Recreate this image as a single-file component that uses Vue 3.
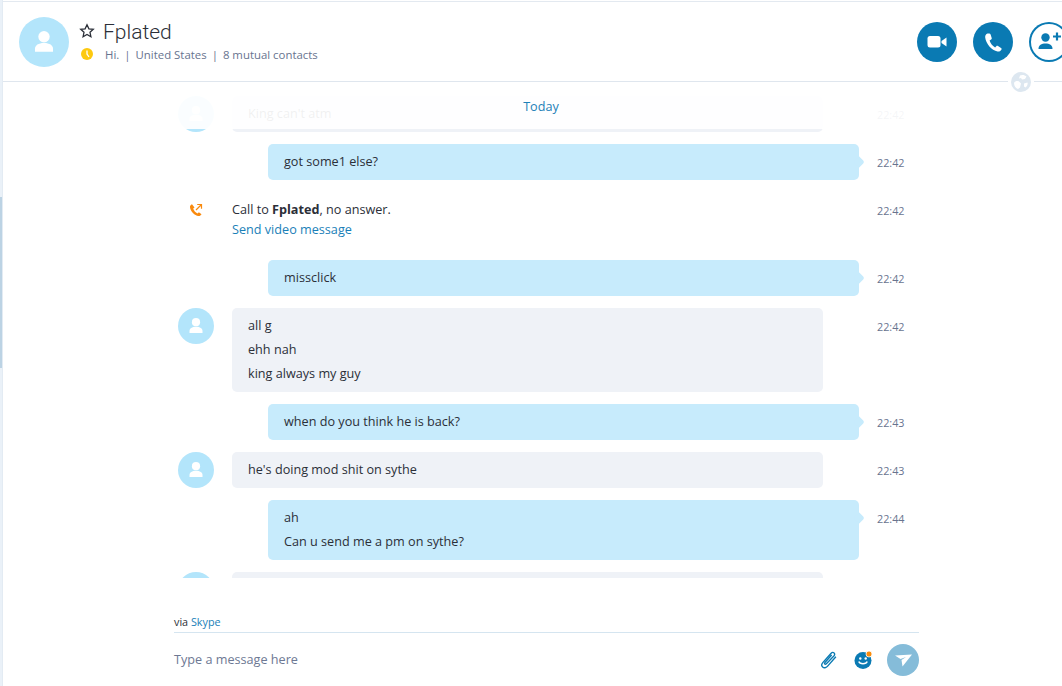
<template>
  <div class="app-shell">
    <div class="side-strip"><div class="thumb"></div></div>
    <div class="chat">
      <header class="chat-head">
        <div class="avatar big">
          <svg viewBox="0 0 36 36"><circle cx="18" cy="14.200" r="4.100" /><path d="M11.500 25v-2c0-2.500 2.500-4.200 6.500-4.200s6.500 1.700 6.500 4.200v2z" /></svg>
        </div>
        <div class="who">
          <div class="name-line">
            <svg class="star" viewBox="0 0 16 16"><path d="M8 1.800l1.900 4 4.400.5-3.300 3 .9 4.400L8 11.500l-3.900 2.200.9-4.400-3.300-3 4.400-.5z" /></svg>
            <span class="name">Fplated</span>
          </div>
          <div class="sub-line">
            <svg class="clock" viewBox="0 0 12 12"><circle cx="6" cy="6" r="6" /><path d="M6 2.500V6l2 3" /></svg>
            <span>Hi.</span><span class="bar">|</span><span>United States</span><span class="bar">|</span><span>8 mutual contacts</span>
          </div>
        </div>
        <div class="actions">
          <button class="round">
            <svg viewBox="0 0 40 40"><rect x="10.500" y="14" width="13" height="11.500" rx="2.500" /><path d="M24.500 19l5-3.500v9l-5-3.500z" /></svg>
          </button>
          <button class="round">
            <svg viewBox="0 0 40 40"><path d="M14.500 11.500c-1.500.5-2.500 2-2.300 4 .6 6 6.500 13 12.300 14 1.800.3 3.300-.5 4-2 .3-.7.1-1.200-.5-1.600l-3-1.900c-.6-.4-1.200-.3-1.700.2l-1.200 1.200c-2.700-1.300-4.700-4-5.500-6.800l1.500-1c.6-.4.8-1 .6-1.700l-1.100-3.400c-.3-.8-1-1.300-1.900-1z" /></svg>
          </button>
          <button class="round outline">
            <svg viewBox="0 0 40 40"><circle cx="16.500" cy="15.500" r="4.200" /><path d="M9.500 27c0-4 3-5.500 7-5.500s7 1.500 7 5.500z" /><path d="M24 14.500h8M28 10.500v8" class="plus" /></svg>
          </button>
        </div>
        <div class="globe">
          <svg viewBox="0 0 20 20"><circle cx="10" cy="10" r="10" /><path class="land" d="M9 3.500c2-1 5-.5 6.500 1l-1.500 2.500-3 .5-1-1.500-2 .5zM3 11c1-2 3.500-2.500 5-1.500l2 2-1 4-2 1.500C5 16.500 3 14 3 11zM13 11.500l3.500-1c.5 2-.5 4-2 5l-1.500-1z" /></svg>
        </div>
      </header>

      <section class="thread">
        <div class="today-veil"></div>
        <div class="today">Today</div>
        <div class="messages">
          <template v-for="m in messages" :key="m.id">
            <div v-if="m.type === 'call'" class="row call">
              <div class="call-icon">
                <svg viewBox="0 0 14 14"><path d="M3 1.200C1.700 1.800.8 2.700 1 4.300c.4 3.800 4.700 8.500 8.500 8.800 1.300.1 2.300-.6 3-1.800l-2.600-2-1.400 1.200C6.500 9.600 4.800 7.500 4.200 5.500l1.300-1z" class="fill" /><path d="M7 7l5-5M8.200 1.500H12.500V5.800" class="line" /></svg>
              </div>
              <div class="call-text">
                <div>Call to <b>Fplated</b>, no answer.</div>
                <a class="link">Send video message</a>
              </div>
              <span class="time">{{ m.time }}</span>
            </div>
            <div v-else-if="m.type === 'in'" class="row incoming">
              <div class="avatar">
                <svg viewBox="0 0 36 36"><circle cx="18" cy="14.200" r="4.100" /><path d="M11.500 25v-2c0-2.500 2.500-4.200 6.500-4.200s6.500 1.700 6.500 4.200v2z" /></svg>
              </div>
              <div class="bubble in">
                <div v-for="l in m.lines" :key="l">{{ l }}</div>
              </div>
              <span class="time">{{ m.time }}</span>
            </div>
            <div v-else class="row outgoing">
              <div class="bubble out">
                <div v-for="l in m.lines" :key="l">{{ l }}</div>
              </div>
              <span class="time">{{ m.time }}</span>
            </div>
          </template>
        </div>
      </section>

      <footer class="composer">
        <div class="via">via <span class="link">Skype</span></div>
        <div class="input-row">
          <span class="placeholder">Type a message here</span>
          <svg class="clip" viewBox="1 0 16 17"><path d="M15.500 5.500l-8 9c-1.300 1.500-3.300 1.800-4.500.7s-1-3 .3-4.500l7.500-8.400c.9-1 2.200-1.200 3-.5s.7 2-.2 3L6.500 12c-.5.500-1.100.6-1.500.3-.4-.4-.3-1 .2-1.500l6.300-7" /></svg>
          <svg class="smile" viewBox="0 0 18 18"><circle cx="9" cy="9.500" r="8.500" class="face" /><circle cx="6.300" cy="7.500" r="1.200" class="eye" /><circle cx="11.700" cy="7.500" r="1.200" class="eye" /><path d="M4.800 10.500c1 3 7.400 3 8.400 0" class="mouth" /><circle cx="15" cy="3" r="3" class="dot" /></svg>
          <button class="send">
            <svg viewBox="0 0 32 32"><path d="M8 11.500l17-1-9.500 12-1-6.500 4.500-3-5.500 2z" /></svg>
          </button>
        </div>
      </footer>
    </div>
  </div>
</template>

<script setup>
const messages = [
  { id: 1, type: "in", lines: ["King can't atm"], time: "22:42" },
  { id: 2, type: "out", lines: ["got some1 else?"], time: "22:42" },
  { id: 3, type: "call", time: "22:42" },
  { id: 4, type: "out", lines: ["missclick"], time: "22:42" },
  { id: 5, type: "in", lines: ["all g", "ehh nah", "king always my guy"], time: "22:42" },
  { id: 6, type: "out", lines: ["when do you think he is back?"], time: "22:43" },
  { id: 7, type: "in", lines: ["he's doing mod shit on sythe"], time: "22:43" },
  { id: 8, type: "out", lines: ["ah", "Can u send me a pm on sythe?"], time: "22:44" },
  // only the top edge of this one shows above the composer
  { id: 9, type: "in", lines: ["\u00a0"], time: "" },
];
</script>

<style>
html,
body {
  margin: 0;
  background: #fff;
}
</style>

<style scoped>
.app-shell {
  display: flex;
  width: 1062px;
  height: 686px;
  overflow: hidden;
  background: #fff;
  font-family: "Open Sans", "Noto Sans", sans-serif;
  font-size: 12px;
  color: #2b2f38;
}
.side-strip {
  width: 2px;
  flex-shrink: 0;
  background: #eaf1f8;
  border-right: 1px solid #e3ebf3;
  padding-top: 197px;
}
.thumb {
  height: 171px;
  background: #bcd3e4;
}
.chat {
  flex: 1;
  min-width: 0;
  display: flex;
  flex-direction: column;
  border-top: 1px solid #e3e9f0;
  margin-top: 1px;
  height: 684px;
}
.chat-head {
  position: relative;
  z-index: 3;
  height: 80px;
  flex-shrink: 0;
  display: flex;
  align-items: flex-start;
  padding: 15px 0 0 16px;
  box-sizing: border-box;
  border-bottom: 1px solid #dfe6ee;
}
.avatar {
  width: 36px;
  height: 36px;
  border-radius: 50%;
  background: #b3e5fb;
  flex-shrink: 0;
}
.avatar svg {
  display: block;
  width: 100%;
  height: 100%;
  fill: #fff;
}
.avatar.big {
  width: 50px;
  height: 50px;
}
.who {
  margin-left: 10px;
  margin-top: -1px;
}
.name-line {
  display: flex;
  align-items: center;
  height: 30px;
}
.star {
  width: 16px;
  height: 16px;
  fill: none;
  stroke: #2b2f38;
  stroke-width: 1.300;
}
.name {
  margin-left: 8px;
  padding-top: 2px;
  font-family: Roboto, "Open Sans", sans-serif;
  font-size: 21px;
  font-weight: 300;
  line-height: 30px;
  color: #2b2f38;
}
.sub-line {
  display: flex;
  align-items: center;
  height: 18px;
  margin-top: -1px;
  color: #68748f;
  font-size: 11.400px;
}
.clock {
  width: 12px;
  height: 12px;
  margin: 0 12px 0 2px;
}
.clock circle {
  fill: #fdc90f;
}
.clock path {
  fill: none;
  stroke: #fff;
  stroke-width: 1.300;
}
.bar {
  margin: 0 5px;
}
.actions {
  margin-left: auto;
  display: flex;
  gap: 16px;
  margin-right: -7px;
  padding-top: 5px;
}
.round {
  width: 40px;
  height: 40px;
  padding: 0;
  border: 0;
  border-radius: 50%;
  background: #0a7ab3;
  flex-shrink: 0;
}
.round svg {
  display: block;
  width: 40px;
  height: 40px;
  fill: #fff;
}
.round.outline {
  background: #fff;
  box-shadow: inset 0 0 0 2px #0a7ab3;
}
.round.outline svg {
  fill: #0a7ab3;
}
.round.outline .plus {
  fill: none;
  stroke: #0a7ab3;
  stroke-width: 2.200;
}
.globe {
  position: absolute;
  right: 28px;
  top: 70px;
  width: 20px;
  height: 20px;
  padding: 0 3px;
  background: #fff;
}
.globe svg {
  display: block;
  width: 20px;
  height: 20px;
  fill: #dde7f0;
}
.globe .land {
  fill: #fff;
}
.thread {
  position: relative;
  height: 496px;
  flex-shrink: 0;
  overflow: hidden;
}
.today-veil {
  position: absolute;
  left: 0;
  right: 0;
  top: 0;
  height: 47px;
  background: rgba(255, 255, 255, 0.93);
  z-index: 1;
}
.today {
  position: absolute;
  top: 14px;
  left: 0;
  width: 1076px;
  text-align: center;
  color: #1f81b8;
  font-size: 12.650px;
  line-height: 20px;
  z-index: 2;
}
.messages {
  display: flex;
  flex-direction: column;
  gap: 12px;
  padding: 14px 0 0 175px;
  font-size: 12.650px;
  line-height: 24px;
}
.row {
  display: flex;
  align-items: flex-start;
}
.incoming .avatar {
  margin-right: 18px;
}
.bubble {
  width: 591px;
  box-sizing: border-box;
  padding: 5px 16px 7px;
  border-radius: 5px;
  position: relative;
}
.bubble.in {
  background: #eff2f7;
  margin-right: 54px;
}
.bubble.out {
  background: #c7ebfc;
  margin-left: 90px;
  margin-right: 18px;
}
.bubble.out::after {
  content: "";
  position: absolute;
  right: -4px;
  top: 14px;
  width: 8px;
  height: 8px;
  background: #c7ebfc;
  transform: rotate(45deg);
  border-top-right-radius: 2px;
}
.time {
  margin-top: 7px;
  color: #68748f;
  font-size: 10.800px;
}
.call {
  padding-top: 7px;
  height: 49px;
}
.call-icon {
  width: 14px;
  height: 14px;
  margin: 4px 29px 0 11px;
}
.call-icon svg {
  display: block;
}
.call-icon .fill {
  fill: #f98a0e;
}
.call-icon .line {
  fill: none;
  stroke: #f98a0e;
  stroke-width: 1.200;
}
.call-text {
  width: 591px;
  line-height: 20px;
  margin-right: 54px;
  margin-left: 0;
}
.call .time {
  margin-top: 0;
}
.link {
  color: #1a7fb8;
}
.composer {
  margin-left: 171px;
  width: 745px;
  padding-top: 35px;
}
.via {
  font-size: 10.800px;
  line-height: 18px;
  height: 19px;
  border-bottom: 1px solid #d5e5f0;
}
.input-row {
  display: flex;
  align-items: center;
  height: 54px;
}
.placeholder {
  color: #6d7893;
  font-size: 12.650px;
  margin-right: auto;
  margin-top: -2px;
}
.clip {
  width: 18px;
  height: 18px;
  margin-right: 16px;
  fill: none;
  stroke: #0a7ab3;
  stroke-width: 1.300;
}
.smile {
  width: 18px;
  height: 18px;
  margin-right: 15px;
}
.smile .face {
  fill: #0a7ab3;
}
.smile .eye {
  fill: #fff;
}
.smile .mouth {
  fill: none;
  stroke: #fff;
  stroke-width: 1.400;
}
.smile .dot {
  fill: #fb8c0c;
  stroke: #fff;
  stroke-width: 0.800;
}
.send {
  width: 32px;
  height: 32px;
  padding: 0;
  border: 0;
  border-radius: 50%;
  background: #85bcd9;
}
.send svg {
  display: block;
  width: 32px;
  height: 32px;
  fill: #fff;
}
</style>
